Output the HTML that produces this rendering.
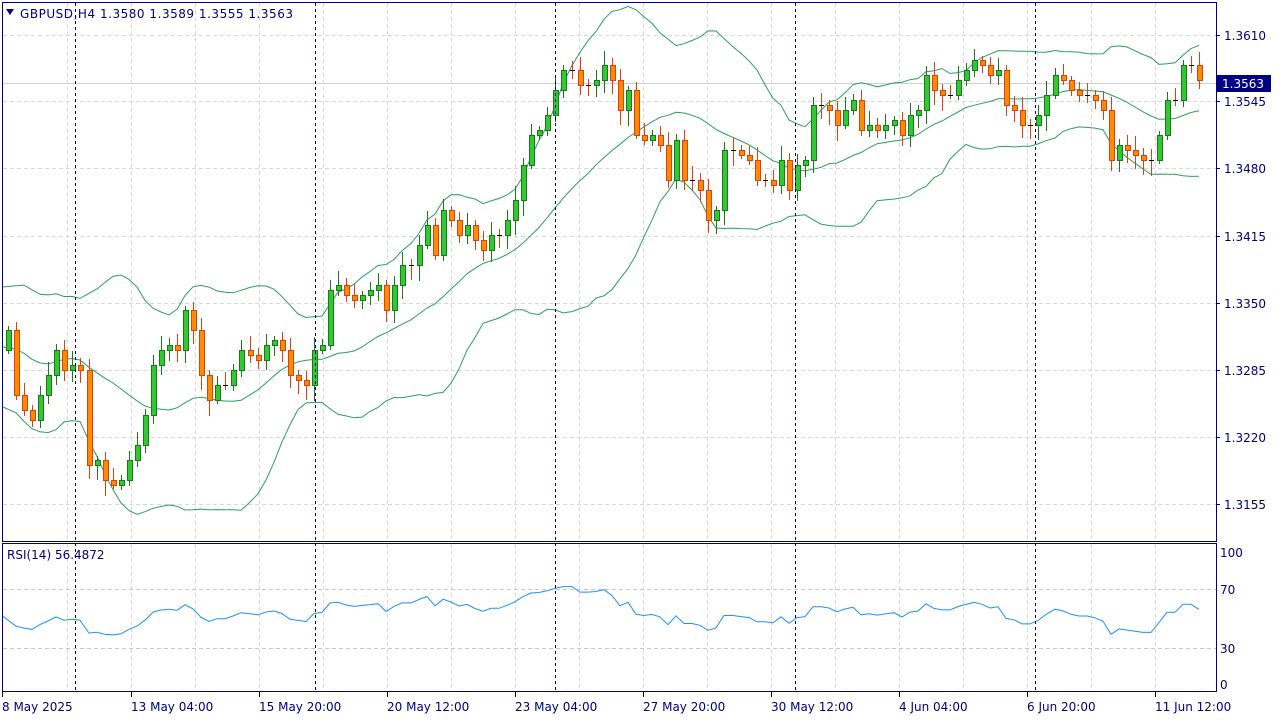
<!DOCTYPE html>
<html><head><meta charset="utf-8"><style>
html,body{margin:0;padding:0;background:#fff;width:1280px;height:720px;overflow:hidden}
svg{display:block;font-family:Tahoma,"DejaVu Sans","Liberation Sans",sans-serif}
</style></head><body>
<svg id="s" width="1280" height="720" xmlns="http://www.w3.org/2000/svg">
<rect width="1280" height="720" fill="#fff"/>
<g id="grid"></g>
<g id="bands" fill="none" stroke="#2aa05a" stroke-width="1"></g>
<g id="candles"></g>
<g id="rsi" fill="none" stroke="#1e90ff" stroke-width="1"></g>
<g id="vl" stroke="#000080" stroke-width="1" stroke-dasharray="3,3"></g>
<rect x="2.5" y="2.5" width="1214" height="539" fill="none" stroke="#000080"/>
<rect x="2.5" y="543.5" width="1214" height="148" fill="none" stroke="#000080"/>
<g id="ax" font-size="12" fill="#000080"></g>
<path d="M6 9 L14 9 L10 15 Z" fill="#000080"/>
<text x="20" y="18" font-size="12" fill="#000080" textLength="273">GBPUSD,H4  1.3580 1.3589 1.3555 1.3563</text>
<text x="7" y="559" font-size="12" fill="#000080">RSI(14) 56.4872</text>
<rect x="1217" y="75" width="54" height="17" fill="#000080"/>
<text x="1222" y="88" font-size="12" fill="#fff">1.3563</text>
</svg>
<script>
const NS="http://www.w3.org/2000/svg";
function el(p,t,a,txt){const e=document.createElementNS(NS,t);for(const k in a)e.setAttribute(k,a[k]);if(txt!=null)e.textContent=txt;document.getElementById(p).appendChild(e);return e;}
const hy=[35,101,168,236,303,370,437,504],hl=["1.3610","1.3545","1.3480","1.3415","1.3350","1.3285","1.3220","1.3155"];
hy.forEach((y,i)=>{el("grid","line",{x1:3,x2:1216,y1:y+.5,y2:y+.5,stroke:"#d8d8d8","stroke-dasharray":"4,3"});
el("ax","line",{x1:1216,x2:1220,y1:y+.5,y2:y+.5,stroke:"#000080"});el("ax","text",{x:1224,y:y+5},hl[i]);});
el("grid","line",{x1:3,x2:1216,y1:83.5,y2:83.5,stroke:"#d0d0d0"});
for(let x=67;x<1216;x+=64){el("grid","line",{x1:x+.5,x2:x+.5,y1:3,y2:541,stroke:"#d8d8d8","stroke-dasharray":"4,3"});el("grid","line",{x1:x+.5,x2:x+.5,y1:544,y2:691,stroke:"#d8d8d8","stroke-dasharray":"4,3"});}
[589,648].forEach(y=>el("grid","line",{x1:3,x2:1216,y1:y+.5,y2:y+.5,stroke:"#c8c8c8","stroke-dasharray":"4,3"}));
[[557,"100"],[594,"70"],[653,"30"],[689,"0"]].forEach(([y,t])=>el("ax","text",{x:1220,y:y},t));
[75,315,555,795,1035].forEach(x=>el("vl","line",{x1:x+.5,x2:x+.5,y1:3,y2:691}));
const tl=[[2,"8 May 2025"],[131,"13 May 04:00"],[259,"15 May 20:00"],[387,"20 May 12:00"],[515,"23 May 04:00"],[643,"27 May 20:00"],[771,"30 May 12:00"],[899,"4 Jun 04:00"],[1027,"6 Jun 20:00"],[1155,"11 Jun 12:00"]];
tl.forEach(([x,t])=>{el("ax","line",{x1:x+.5,x2:x+.5,y1:692,y2:697,stroke:"#000080"});el("ax","text",{x:x,y:711},t);});
const P=[330,310,340,300,280,320,350,330,370,400,380,350,330,300,320,360,390,420,380,340,320,350,370,390,360,340,330,310,320,330];
const C=[330,395,410,420,395,375,350,370,365,370,465,460,480,485,480,460,445,415,365,350,345,350,310,330,375,400,385,385,370,350,355,360,345,340,350,375,380,385,350,345,290,285,295,300,295,290,285,310,285,265,265,245,225,255,210,220,235,225,240,250,235,235,220,200,165,135,130,115,90,70,70,85,85,80,65,80,110,90,135,140,135,145,180,140,180,180,190,220,210,150,150,155,160,180,180,185,160,190,165,160,105,105,110,125,110,100,130,125,130,125,120,135,115,110,75,90,95,95,80,70,60,65,75,70,105,110,125,125,115,95,75,80,90,95,95,100,110,160,145,150,155,160,160,135,100,100,65,65,80];
const A=P.concat(C),off=P.length;
const n=C.length,x0=8,dx=8.05;
let prev=C[0]+20;
const mids=[],ups=[],lows=[];
for(let i=0;i<n;i++){
 const o=prev,c=C[i],x=Math.round(x0+i*dx);
 const hi=Math.min(o,c)-(4+((i*37)%11)),lo=Math.max(o,c)+(4+((i*53)%13));
 const up=c<o;
 el("candles","line",{x1:x+.5,x2:x+.5,y1:hi,y2:lo,stroke:up?"#1a7a1a":"#e04010"});
 const t=Math.min(o,c),h=Math.max(Math.abs(o-c),1);
 if(h<=1) el("candles","line",{x1:x-2,x2:x+3,y1:t+.5,y2:t+.5,stroke:"#000"});
 else el("candles","rect",{x:x-2+.5,y:t+.5,width:5,height:h,fill:up?"#32c832":"#ff8c00",stroke:up?"#1a7a1a":"#e04010"});
 prev=c;
 const j=i+off,arr=A.slice(j-19,j+1);const m=arr.reduce((a,b)=>a+b)/arr.length;
 const sd=Math.sqrt(arr.reduce((a,b)=>a+(b-m)*(b-m),0)/arr.length);
 const xx=i==0?3:x;
 mids.push([xx,m]);ups.push([xx,m-2*sd]);lows.push([xx,m+2*sd]);
}
const pl=a=>a.map((p,i)=>(i?"L":"M")+p[0]+" "+p[1].toFixed(1)).join("");
el("bands","path",{d:pl(mids)});el("bands","path",{d:pl(ups)});el("bands","path",{d:pl(lows)});
let ag=0,al=0;const pts=[];
for(let j=1;j<A.length;j++){const ch=A[j-1]-A[j];const g=Math.max(ch,0),l=Math.max(-ch,0);
 if(j<=14){ag+=g/14;al+=l/14;}else{ag=(ag*13+g)/14;al=(al*13+l)/14;}
 let r=al==0?100:100-100/(1+ag/al);
 r=50+(r-50)*0.7;
 const i=j-off; if(i<0)continue;
 pts.push([i==0?3:Math.round(x0+i*dx),692-r*1.475]);}
el("rsi","path",{d:pl(pts)});
</script>
</body></html>
